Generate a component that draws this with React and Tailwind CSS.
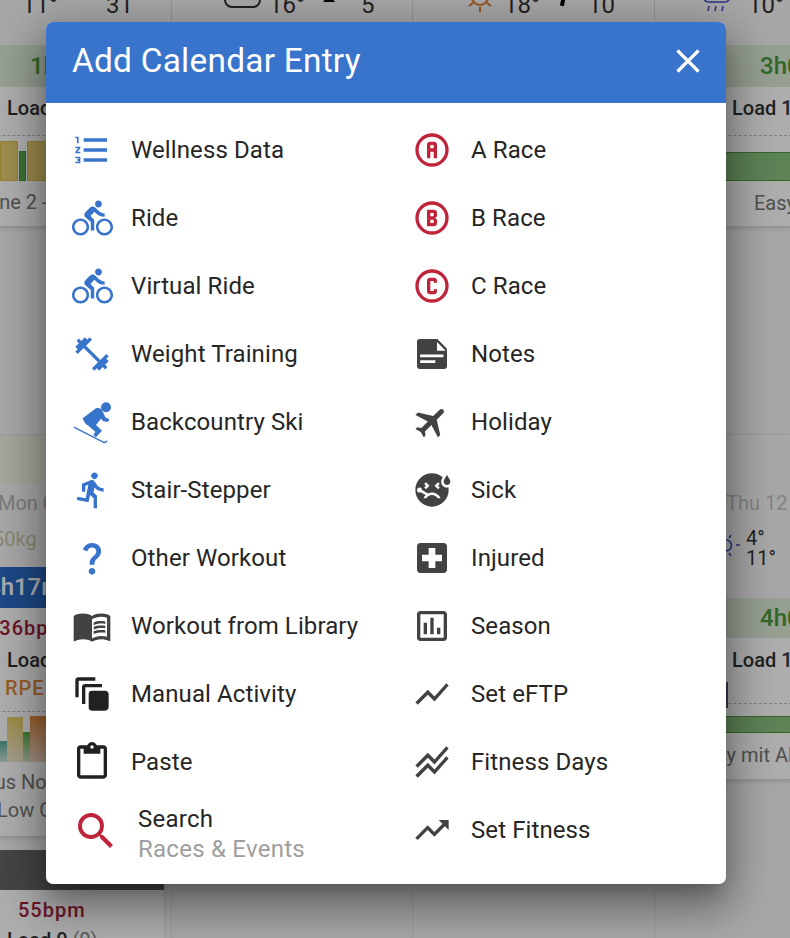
import React from "react";
import {
  MdFormatListNumbered, MdDirectionsBike, MdFitnessCenter, MdDirectionsRun,
  MdQuestionMark, MdMenuBook, MdAutoAwesomeMotion, MdContentPaste, MdSearch, MdFlight, MdSick,
  MdLocalHospital, MdOutlineAssessment, MdShowChart, MdStackedLineChart, MdTrendingUp, MdClose,
} from "react-icons/md";

const Race = ({ d }) => (
  <svg viewBox="0 0 24 24" width="40" height="40" fill="currentColor"><path d={d} /></svg>
);
const A = "M11,7H13A2,2 0 0,1 15,9V17H13V13H11V17H9V9A2,2 0 0,1 11,7M11,9V11H13V9H11M12,20A8,8 0 0,0 20,12A8,8 0 0,0 12,4A8,8 0 0,0 4,12A8,8 0 0,0 12,20M12,2A10,10 0 0,1 22,12A10,10 0 0,1 12,22A10,10 0 0,1 2,12A10,10 0 0,1 12,2Z";
const B = "M15,10.5C15,11.3 14.3,12 13.5,12C14.3,12 15,12.7 15,13.5V15A2,2 0 0,1 13,17H9V7H13A2,2 0 0,1 15,9V10.5M13,15V13H11V15H13M13,11V9H11V11H13M12,2A10,10 0 0,1 22,12A10,10 0 0,1 12,22A10,10 0 0,1 2,12A10,10 0 0,1 12,2M12,4A8,8 0 0,0 4,12A8,8 0 0,0 12,20A8,8 0 0,0 20,12A8,8 0 0,0 12,4Z";
const C = "M11,7H13A2,2 0 0,1 15,9V10H13V9H11V15H13V14H15V15A2,2 0 0,1 13,17H11A2,2 0 0,1 9,15V9A2,2 0 0,1 11,7M12,2A10,10 0 0,1 22,12A10,10 0 0,1 12,22A10,10 0 0,1 2,12A10,10 0 0,1 12,2M12,4A8,8 0 0,0 4,12A8,8 0 0,0 12,20A8,8 0 0,0 20,12A8,8 0 0,0 12,4Z";

const NoteIcon = () => (
  <svg viewBox="0 0 24 24" width="40" height="40" fill="currentColor" fillRule="evenodd">
    <path d="M4.6 3h10.2c.3 0 .5.1.7.3l5.2 5.2c.2.2.3.4.3.7V19.4c0 .9-.7 1.6-1.6 1.6H4.6C3.700 21 3 20.300 3 19.400V4.600C3 3.700 3.700 3 4.600 3zM15 4.800V10h5.200zM4.900 12.300V14H18.900v-1.700zM4.900 15.700v1.700H14v-1.700z" />
  </svg>
);

const SkiIcon = () => (
  <svg viewBox="0 0 24 24" width="40" height="40" fill="currentColor" className="overflow-visible">
    <circle cx="20.400" cy="3.200" r="3" />
    <path d="M6.400 9.800L14.400 3.800C15.800 3.300 17.300 3.800 18 4.800L20 9.200L22.400 10.400L21.600 12L18.800 11.600L17.400 10L14.400 13.800L18 17.200L14.400 21.200L12.800 19.800L14 17.800L10 14.400C8.500 13.800 7 11.800 6.400 9.800Z" />
    <path d="M1.400 15.200L19 24.200C19.600 24.400 20.300 24.200 20.800 23.600" fill="none" stroke="currentColor" strokeWidth="0.900" strokeLinecap="round" />
  </svg>
);

const blue = "text-[#3874cb]";
const dark = "text-[#424242]";
const red = "text-[#c0243a]";

const left = [
  ["Wellness Data", <MdFormatListNumbered size={40} />, blue],
  ["Ride", <MdDirectionsBike size={41} />, blue],
  ["Virtual Ride", <MdDirectionsBike size={41} />, blue],
  ["Weight Training", <MdFitnessCenter size={40} />, blue],
  ["Backcountry Ski", <SkiIcon />, blue],
  ["Stair-Stepper", <MdDirectionsRun size={40} />, blue],
  ["Other Workout", <MdQuestionMark size={40} />, blue],
  ["Workout from Library", <MdMenuBook size={40} />, dark],
  ["Manual Activity", <MdAutoAwesomeMotion size={40} />, "text-[#212121]"],
  ["Paste", <MdContentPaste size={40} />, "text-[#212121]"],
];
const right = [
  ["A Race", <Race d={A} />, red],
  ["B Race", <Race d={B} />, red],
  ["C Race", <Race d={C} />, red],
  ["Notes", <NoteIcon />, dark],
  ["Holiday", <MdFlight size={40} className="rotate-45" />, dark],
  ["Sick", <MdSick size={40} />, dark],
  ["Injured", <MdLocalHospital size={40} />, dark],
  ["Season", <MdOutlineAssessment size={40} />, dark],
  ["Set eFTP", <MdShowChart size={40} />, dark],
  ["Fitness Days", <MdStackedLineChart size={40} />, dark],
  ["Set Fitness", <MdTrendingUp size={40} />, dark],
];

const Row = ({ label, icon, color }) => (
  <div className="flex items-center h-[68px]">
    <span className={`w-[40px] h-[40px] flex items-center justify-center shrink-0 [&>svg]:shrink-0 ${color}`}>{icon}</span>
    <span className="ml-[19px] text-[24px] leading-[30px] tracking-[0.1px] text-[#262626] whitespace-nowrap">{label}</span>
  </div>
);

const Divider = "border-r border-[#d9d9d9]";

const Weather = ({ children }) => (
  <div className="h-[22px] flex items-center -mt-[6px] text-[24px] text-[#333] whitespace-nowrap">{children}</div>
);

function Bars({ kind }) {
  if (kind === "yellow") {
    return (
      <div className="flex items-end h-[40px] pl-[62px] mt-[5px]">
        <div className="w-[18px] h-[40px] bg-[#e8cf72] border border-[#dcbc4c]" />
        <div className="w-[7px] h-[30px] bg-[#5aa84c] border border-[#3f9a35] mx-[1px]" />
        <div className="w-[20px] h-[40px] bg-[#e8cf72] border border-[#dcbc4c]" />
        <div className="w-[7px] h-[30px] bg-[#5aa84c] border border-[#3f9a35] mx-[1px]" />
        <div className="w-[60px] h-[40px] bg-[#e8cf72] border border-[#dcbc4c]" />
      </div>
    );
  }
  if (kind === "mix") {
    return (
      <div className="flex items-end h-[46px] mt-[4px] pl-[62px]">
        <div className="w-[7px] h-[21px] bg-gradient-to-b from-[#55a89a] to-[#cfe3df]" />
        <div className="w-[16px] h-[45px] bg-gradient-to-b from-[#e7cf62] to-[#f1e9cd]" />
        <div className="w-[8px] h-[30px] bg-gradient-to-b from-[#56ad4a] to-[#cfe5cb]" />
        <div className="w-[16px] h-[46px] bg-gradient-to-b from-[#e08a3c] to-[#f0d9c6]" />
        <div className="w-[120px] h-[20px] bg-[#cfe5cb]" />
      </div>
    );
  }
  return null;
}

const Line = ({ pl, className = "", children }) => (
  <div style={{ paddingLeft: pl }} className={`whitespace-nowrap ${className}`}>{children}</div>
);

function App() {
  return (
    <div className="relative w-[790px] h-[938px] overflow-hidden bg-[#f7f7f7] font-['Roboto',sans-serif]">
      {/* calendar behind the dialog */}
      <div className="w-[965px] -ml-[69px] grid grid-cols-[241px_241px_242px_241px] grid-rows-[434px_504px]">
        {/* week 1 */}
        <div className={Divider}>
          <Weather>
            <span className="ml-[91px]">11°</span>
            <span className="ml-[48px]">31</span>
          </Weather>
          <div className="mx-[7px] mt-[29px] h-[181px] bg-white shadow-md">
            <div className="h-[42px] bg-[#dcebd8] text-[#4c9a3c] text-[24px] font-medium leading-[42px]"><Line pl={92}>1h00m</Line></div>
            <Line pl={69} className="mt-[9px] text-[20px] leading-[24px] font-medium text-[#333]">Load 100 (100)</Line>
            <div className="mt-[15px] border-t border-dashed border-[#bbb]" />
            <Bars kind="yellow" />
            <Line pl={38} className="mt-[9px] text-[20px] leading-[24px] text-[#777]">Zone 2 - 1h</Line>
          </div>
        </div>
        <div className={Divider}>
          <Weather>
            <span className="ml-[52px] w-[37px] h-[20px] rounded-b-[8px] border-[2px] border-[#333] -mt-[14px]" />
            <span className="ml-[8px]">16°</span>
            <span className="ml-[18px] w-0 h-0 border-x-[6px] border-x-transparent border-b-[8px] border-b-black -mt-[14px]" />
            <span className="ml-[26px]">5</span>
          </Weather>
        </div>
        <div className={Divider}>
          <Weather>
            <svg viewBox="0 0 30 16" width="30" height="16" className="ml-[52px] -mt-[1px] text-[#d97a2b]" fill="none" stroke="currentColor" strokeWidth="2">
              <path d="M7 0a8 8 0 0 0 16 0M15 10v5M4 9l4-3M26 9l-4-3" />
            </svg>
            <span className="ml-[9px]">18°</span>
            <span className="ml-[21px] w-[4px] h-[11px] bg-black rotate-12 -mt-[10px]" />
            <span className="ml-[23px]">10</span>
          </Weather>
        </div>
        <div>
          <Weather>
            <svg viewBox="0 0 30 16" width="30" height="16" className="ml-[47px] text-[#3f4ec0]" fill="none" stroke="currentColor" strokeWidth="1.5">
              <path d="M2 0c0 3 2 5 5 5h16c2 0 5-2 5-5M7 9l-1 5M14 9l-1 5M21 9l-1 5" />
            </svg>
            <span className="ml-[16px]">10°</span>
          </Weather>
          <div className="mx-[8px] mt-[29px] h-[181px] bg-white shadow-md">
            <div className="h-[42px] bg-[#dcebd8] text-[#4c9a3c] text-[24px] font-medium leading-[42px]"><Line pl={97}>3h00m</Line></div>
            <Line pl={69} className="mt-[9px] text-[20px] leading-[24px] font-medium text-[#333]">Load 100 (100)</Line>
            <div className="mt-[15px] border-t border-dashed border-[#bbb]" />
            <div className="mt-[16px] h-[29px] bg-[#89c07f] border border-[#4c9a3c]" />
            <Line pl={91} className="mt-[10px] text-[20px] leading-[24px] text-[#777]">Easy Ride</Line>
          </div>
        </div>

        {/* week 2 */}
        <div className={`border-t border-[#e4e4e4] ${Divider}`}>
          <div className="h-[48px] bg-[#f4f3e6]" />
          <Line pl={67} className="mt-[7px] h-[26px] text-[20px] leading-[26px] text-[#b5b5b5]">Mon 09</Line>
          <Line pl={62} className="mt-[10px] h-[26px] text-[20px] leading-[26px] text-[#c9c6a4]">50kg</Line>
          <div className="mx-[7px] mt-[15px] h-[269px] bg-white shadow-md">
            <div className="h-[41px] bg-[#2b6bc6] text-white text-[24px] font-medium leading-[41px]"><Line pl={49}>4h17m</Line></div>
            <Line pl={49} className="mt-[8px] h-[24px] text-[20px] leading-[24px] font-medium tracking-[1px] text-[#a01e3c]">136bpm</Line>
            <Line pl={69} className="mt-[8px] h-[24px] text-[20px] leading-[24px] font-medium text-[#333]">Load 100</Line>
            <Line pl={67} className="mt-[4px] h-[24px] text-[20px] leading-[24px] font-medium text-[#e08a3c] tracking-[1px]">RPE</Line>
            <div className="mt-[11px] border-t border-dashed border-[#bbb]" />
            <Bars kind="mix" />
            <Line pl={24} className="mt-[8px] text-[20px] leading-[24px] text-[#777]">Focus Notes</Line>
            <Line pl={59} className="mt-[4px] text-[20px] leading-[24px] text-[#777]">Low Cadence</Line>
          </div>
          <div className="mx-[7px] mt-[14px] h-[120px] bg-white shadow-md">
            <div className="h-[40px] bg-[#666]" />
            <Line pl={80} className="mt-[8px] h-[24px] text-[20px] leading-[24px] font-medium tracking-[1px] text-[#a01e3c]">55bpm</Line>
            <Line pl={69} className="mt-[6px] h-[24px] text-[20px] leading-[24px] font-medium text-[#333]">Load 0 <span className="text-[#888] font-normal">(0)</span></Line>
          </div>
        </div>
        <div className={`border-t border-[#e4e4e4] ${Divider}`} />
        <div className={`border-t border-[#e4e4e4] ${Divider}`} />
        <div className="border-t border-[#e4e4e4]">
          <Line pl={71} className="mt-[55px] h-[26px] text-[20px] leading-[26px] text-[#c2c2c2]">Thu 12</Line>
          <div className="mt-[12px] h-[40px] flex text-[20px] leading-[20px] text-[#333]">
            <svg viewBox="0 0 26 26" width="26" height="26" className="ml-[63px] mt-[4px] shrink-0 text-[#3f4ec0]" fill="none" stroke="currentColor" strokeWidth="1.500">
              <path d="M8 8a5.500 5.500 0 1 1 0 11M13 3l-2 3M18 13h4M13 24l-2-3" />
            </svg>
            <div className="ml-[2px]">
              <div>4°</div>
              <div>11°</div>
            </div>
            <span className="ml-[15px] mt-[27px] w-[5px] h-[7px] bg-black" />
          </div>
          <div className="mx-[8px] mt-[30px] h-[181px] bg-white shadow-md">
            <div className="h-[40px] bg-[#dcebd8] text-[#4c9a3c] text-[24px] font-medium leading-[40px]"><Line pl={97}>4h00m</Line></div>
            <Line pl={69} className="mt-[10px] h-[24px] text-[20px] leading-[24px] font-medium text-[#333]">Load 100 (100)</Line>
            <div className="mt-[10px] ml-[63px] w-[2px] h-[26px] bg-[#55557a]" />
            <div className="-mt-[5px] border-t border-dashed border-[#bbb]" />
            <div className="mt-[12px] h-[17px] bg-[#89c07f] border border-[#4c9a3c]" />
            <Line pl={31} className="mt-[10px] text-[20px] leading-[24px] text-[#777]">Easy mit Alex</Line>
          </div>
        </div>
      </div>

      {/* scrim and dialog */}
      <div className="absolute inset-0 bg-black/32 pl-[46px] pt-[22px]">
        <div className="w-[680px] h-[862px] bg-white rounded-[7px] overflow-hidden shadow-[0_11px_15px_-7px_rgba(0,0,0,0.2),0_24px_38px_3px_rgba(0,0,0,0.24),0_9px_46px_8px_rgba(0,0,0,0.22)]">
          <div className="h-[81px] bg-[#3874cb] flex items-center justify-between pl-[26px] pr-[18px] pb-[3px] text-white">
            <span className="text-[33.400px] leading-[40px] tracking-[0.25px]">Add Calendar Entry</span>
            <MdClose size={40} />
          </div>
          <div className="grid grid-cols-[340px_1fr] pt-[13px] pl-[26px]">
            <div>
              {left.map(([l, i, c]) => <Row key={l} label={l} icon={i} color={c} />)}
              <div className="flex items-center h-[68px]">
                <span className={`w-[40px] h-[40px] flex items-center justify-center shrink-0 ${red}`}>
                  <MdSearch size={48} className="shrink-0 translate-x-[4px] translate-y-[1px]" />
                </span>
                <div className="ml-[26px] pt-[8px] text-[24px] leading-[30px] tracking-[0.25px] whitespace-nowrap">
                  <div className="text-[#262626]">Search</div>
                  <div className="text-[#9e9e9e]">Races &amp; Events</div>
                </div>
              </div>
            </div>
            <div>
              {right.map(([l, i, c]) => <Row key={l} label={l} icon={i} color={c} />)}
            </div>
          </div>
        </div>
      </div>
    </div>
  );
}

export default App;
